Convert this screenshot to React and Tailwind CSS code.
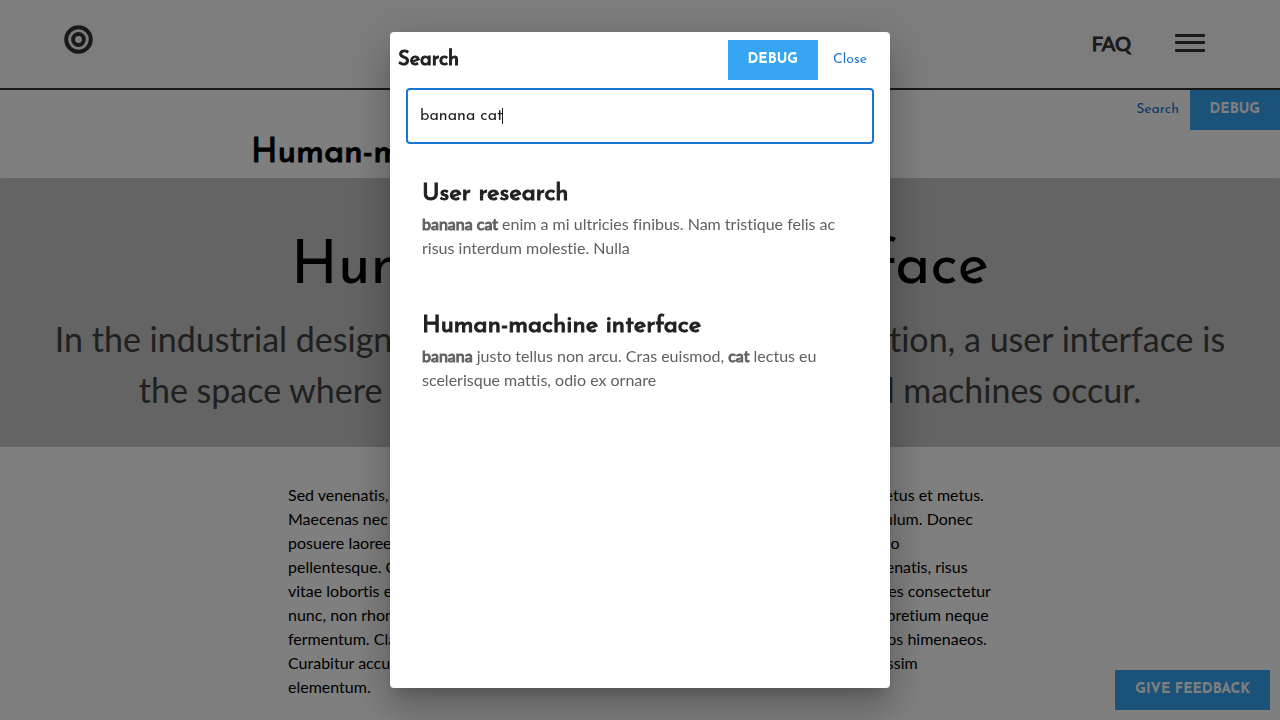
import React from "react";

const display = "font-['Josefin_Sans','Lato',sans-serif]";
const heavy = "font-normal [-webkit-text-stroke:1px_currentColor]";

const bodyLines = [
  "Sed venenatis, nulla vel feugiat gravida, justo lorem tempus nisl, vitae porta nisi nec metus et metus.",
  "Maecenas nec libero at sapien dictum tempor vel sit amet in arcu. Integer sed a vestibulum. Donec",
  "posuere laoreet mauris, in tempus lorem facilisis eget. Nullam a sapien in erat commodo",
  "pellentesque. Cras euismod, lectus eu scelerisque mattis, odio ex pretium aliquam venenatis, risus",
  "vitae lobortis elit dolor id sapien. Praesent a nec orci vitae ligula vehicula sodales ultrices consectetur",
  "nunc, non rhoncus nibh lacinia vel. Quisque sed mauris lorem, a vehicula laoreet nunc pretium neque",
  "fermentum. Class aptent taciti sociosqu ad litora torquent per conubia quis, per inceptos himenaeos.",
  "Curabitur accumsan justo tellus, in volutpat arcu ornare a. Nam in pretium nibh a dignissim",
  "elementum.",
];

const results = [
  {
    title: "User research",
    excerpt: (
      <>
        <Mark>banana cat</Mark> enim a mi ultricies finibus. Nam tristique felis ac risus interdum
        molestie. Nulla
      </>
    ),
  },
  {
    title: "Human-machine interface",
    excerpt: (
      <>
        <Mark>banana</Mark> justo tellus non arcu. Cras euismod, <Mark>cat</Mark> lectus eu
        scelerisque mattis, odio ex ornare
      </>
    ),
  },
];

function Mark({ children }) {
  return <strong className={heavy}>{children}</strong>;
}

function SolidButton({ children }) {
  return (
    <button
      type="button"
      className="flex h-10 items-center justify-center bg-[#36a5f3] px-5 text-[14px] leading-5 font-bold text-white uppercase"
    >
      {children}
    </button>
  );
}

function TextButton({ children }) {
  return (
    <button type="button" className="h-10 w-16 text-[14px] leading-5 text-[#1976d2]">
      {children}
    </button>
  );
}

function Header() {
  return (
    <header className="flex h-[90px] items-center justify-between border-b-2 border-[#333033] bg-[#fafafa] pr-[75px] pl-16">
      <a href="#home" aria-label="Home" className="mb-2.5">
        <svg width="29" height="29" viewBox="0 0 29 29" fill="none" stroke="#333" strokeWidth="4">
          <circle cx="14.5" cy="14.5" r="12.3" />
          <circle cx="14.5" cy="14.5" r="5.4" />
        </svg>
      </a>
      <nav className="flex items-center gap-11">
        <a href="#faq" className={`mb-0.5 text-[20px] leading-7 text-[#333] ${heavy}`}>
          FAQ
        </a>
        <button type="button" aria-label="Menu" className="mb-0.5">
          <svg width="30" height="18" viewBox="0 0 30 18" fill="#333">
            <rect width="30" height="3" rx="1" />
            <rect y="7" width="30" height="3" rx="1" />
            <rect y="15" width="30" height="3" rx="1" />
          </svg>
        </button>
      </nav>
    </header>
  );
}

function Page() {
  return (
    <div className="min-h-screen bg-white text-black">
      <Header />
      <div className={`flex justify-end ${display}`}>
        <TextButton>Search</TextButton>
        <SolidButton>Debug</SolidButton>
      </div>
      <div className="mx-auto max-w-[778px]">
        <h2 className={`text-[34px] leading-[48px] ${display} ${heavy}`}>
          Human-machine interface
        </h2>
      </div>
      <section className="rounded-[1px] bg-[#c8c8c8] px-12 pt-[50px] pb-8 text-center">
        <h1 className={`text-[60px] leading-[81px] ${display}`}>Human-machine interface</h1>
        <p className="pt-1 text-[34px] leading-[51px] text-[#404040]">
          In the industrial design field of human–computer interaction, a user interface is the
          space where interactions between humans and machines occur.
        </p>
      </section>
      <p className="mx-auto max-w-[704px] pt-9 text-base leading-6">
        {bodyLines.map((line) => (
          <span key={line} className="block whitespace-nowrap">
            {line}
          </span>
        ))}
      </p>
    </div>
  );
}

function SearchDialog() {
  return (
    <div
      role="dialog"
      aria-modal="true"
      aria-labelledby="search-title"
      className="flex h-full w-full max-w-[500px] flex-col rounded bg-white text-[#212121] shadow-[0_11px_15px_-7px_rgba(0,0,0,0.2),0_24px_38px_3px_rgba(0,0,0,0.14),0_9px_46px_8px_rgba(0,0,0,0.12)]"
    >
      <div className={`flex items-center px-2 pt-2 ${display}`}>
        <h2 id="search-title" className={`flex-1 text-[20px] leading-7 ${heavy}`}>
          Search
        </h2>
        <SolidButton>Debug</SolidButton>
        <TextButton>Close</TextButton>
      </div>
      <div className="relative px-4 pt-2">
        <input
          type="text"
          aria-label="Search"
          autoFocus
          defaultValue="banana cat"
          className={`h-14 w-full rounded border-2 border-[#1976d2] px-3 text-base leading-6 caret-transparent outline-none ${display}`}
        />
        <span aria-hidden="true" className="absolute top-7 left-28 h-4 w-px bg-[#212121]" />
      </div>
      <ul className="px-8 pt-8">
        {results.map((result) => (
          <li key={result.title} className="pb-12">
            <h3 className={`text-[24px] leading-9 ${display} ${heavy}`}>{result.title}</h3>
            <p className="text-base leading-6 text-[#606060]">{result.excerpt}</p>
          </li>
        ))}
      </ul>
    </div>
  );
}

export default function App() {
  return (
    <div className="h-screen overflow-hidden font-['Lato',sans-serif] [font-variant-ligatures:none]">
      <Page />
      <div className={`fixed right-2.5 bottom-2.5 ${display}`}>
        <SolidButton>Give feedback</SolidButton>
      </div>
      <div className="fixed inset-0 flex justify-center bg-black/50 py-8">
        <SearchDialog />
      </div>
    </div>
  );
}
